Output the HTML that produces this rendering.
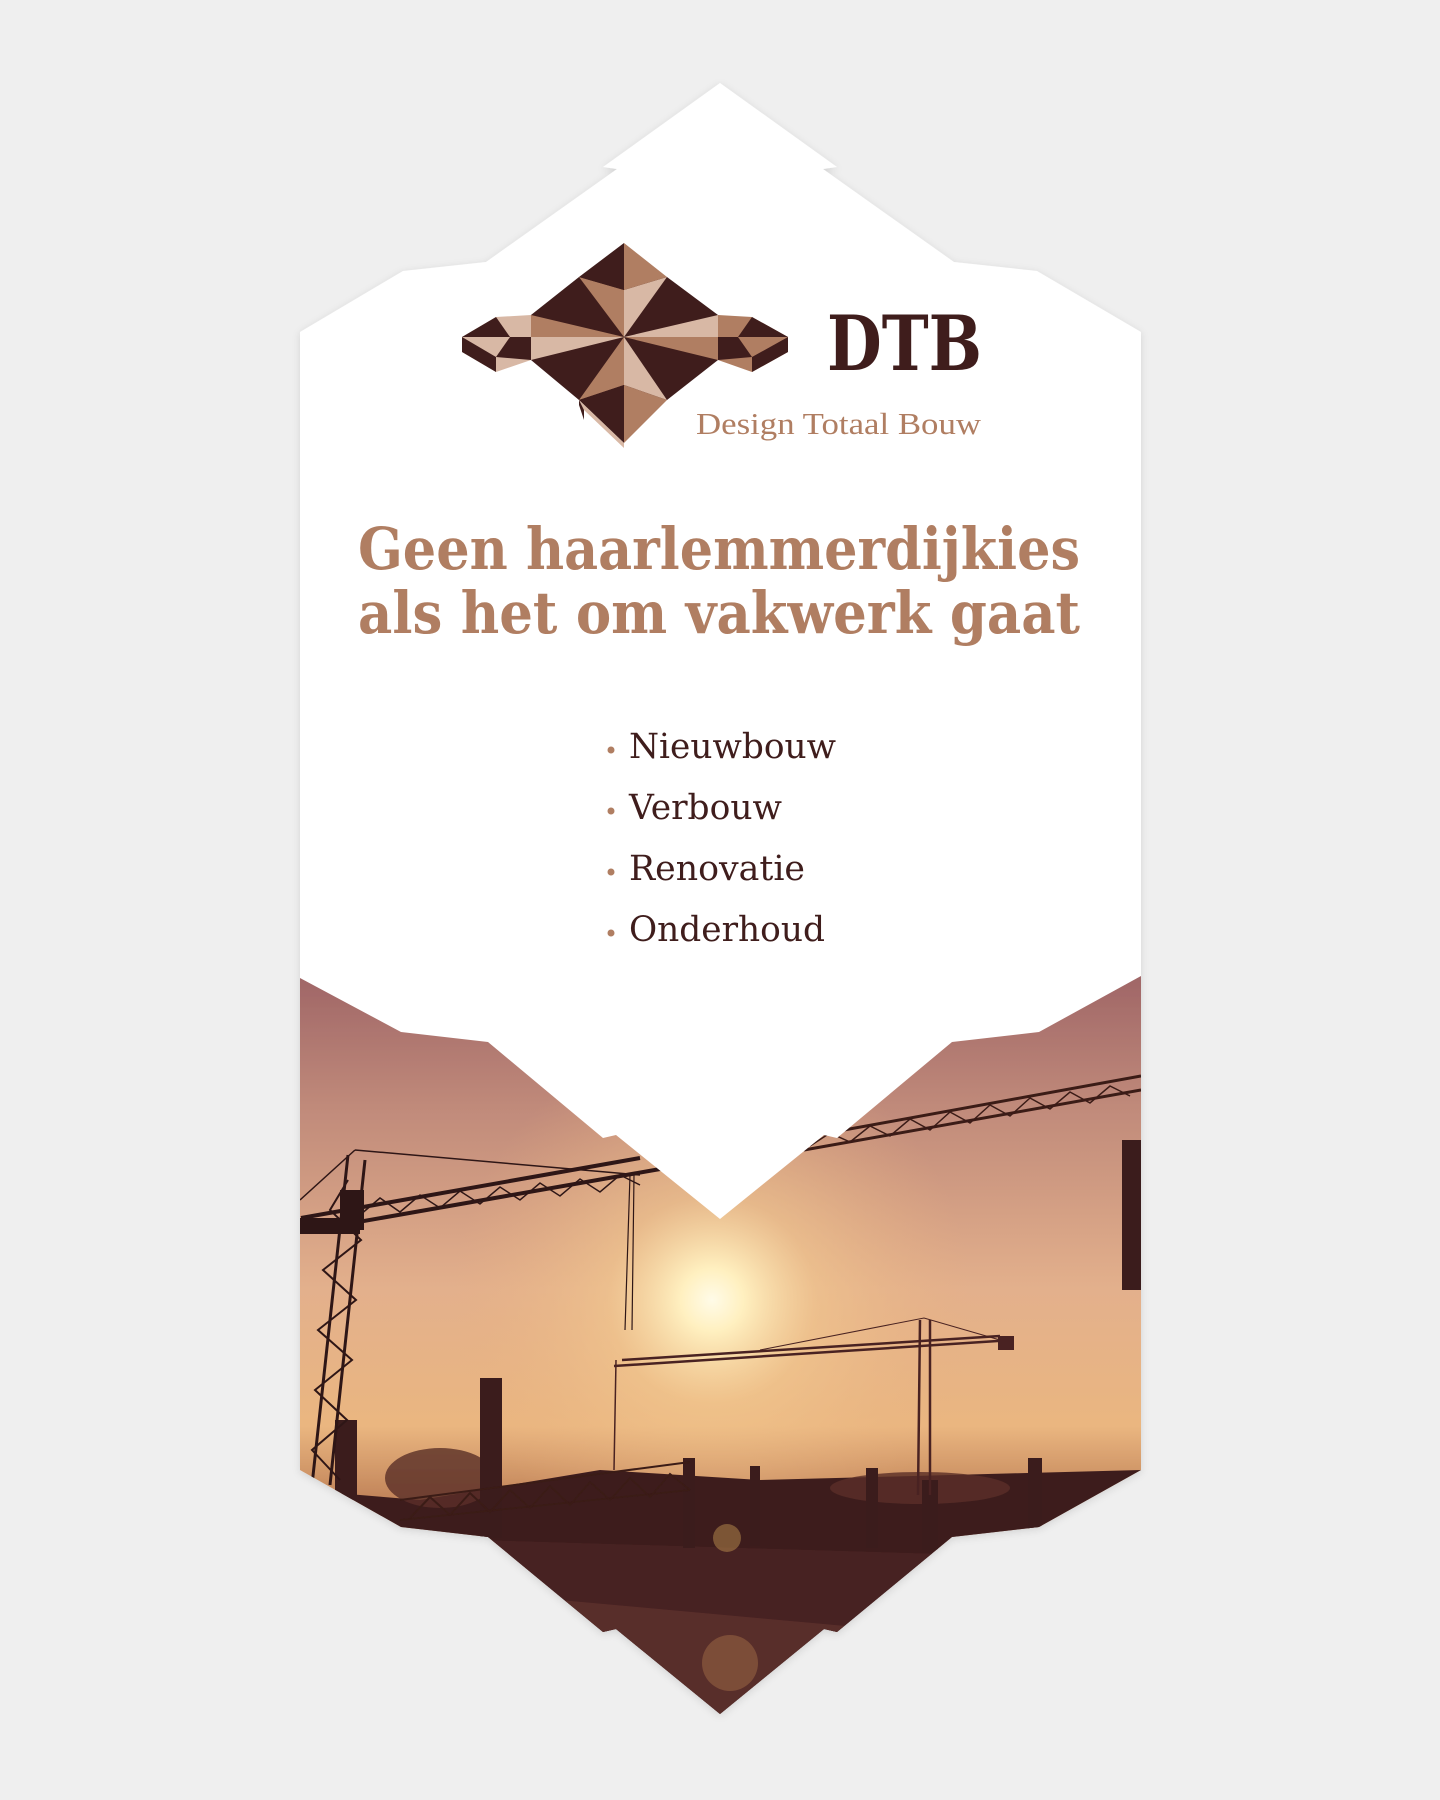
<!DOCTYPE html>
<html><head><meta charset="utf-8"><style>
html,body{margin:0;padding:0;background:#efefef;}
svg{display:block}
</style></head><body>
<svg width="1440" height="1800" viewBox="0 0 1440 1800" xmlns="http://www.w3.org/2000/svg">
<defs>
<clipPath id="photo"><polygon points="300,972 1141,972 1141,1470 1039,1527 952,1537 837,1632 824,1629 720,1714 616,1629 603,1632 488,1537 401,1527 300,1470"/></clipPath>
<linearGradient id="sky" x1="0" y1="0" x2="0" y2="1">
<stop offset="0" stop-color="#9e6466"/><stop offset="0.18" stop-color="#c08a7a"/><stop offset="0.42" stop-color="#e3b08c"/><stop offset="0.6" stop-color="#eab680"/><stop offset="0.7" stop-color="#c08258"/><stop offset="0.8" stop-color="#5a2d24"/><stop offset="1" stop-color="#3a1a1c"/>
</linearGradient>
<radialGradient id="sun" cx="712" cy="1300" r="260" gradientUnits="userSpaceOnUse">
<stop offset="0" stop-color="#fffbe8"/><stop offset="0.12" stop-color="#fff0c0"/><stop offset="0.4" stop-color="#f3c98f" stop-opacity="0.6"/><stop offset="1" stop-color="#e9b080" stop-opacity="0"/>
</radialGradient>
<filter id="sh" x="-5%" y="-5%" width="110%" height="110%"><feDropShadow dx="0" dy="2" stdDeviation="4" flood-color="#000" flood-opacity="0.12"/></filter>
</defs>
<g filter="url(#sh)">
<g clip-path="url(#photo)">
<rect x="300" y="970" width="842" height="760" fill="url(#sky)"/>
<rect x="300" y="970" width="842" height="760" fill="url(#sun)"/>
<path d="M300,1490 L420,1500 L600,1470 L760,1480 L1141,1470 L1141,1730 L300,1730 Z" fill="#3d1d1e"/>
<path d="M480,1540 L1141,1560 L1141,1730 L480,1730Z" fill="#4a2422" opacity="0.7"/>
<path d="M560,1600 L1000,1640 L1000,1730 L560,1730Z" fill="#6b3a34" opacity="0.5"/>
<g fill="#5a2f27" opacity="0.8"><ellipse cx="440" cy="1478" rx="55" ry="30"/><ellipse cx="920" cy="1488" rx="90" ry="16"/></g>
<g fill="#3a1b1c">
<rect x="480" y="1378" width="22" height="160"/><rect x="683" y="1458" width="12" height="90"/>
<rect x="750" y="1466" width="10" height="80"/><rect x="866" y="1468" width="12" height="80"/>
<rect x="922" y="1480" width="16" height="70"/><rect x="1028" y="1458" width="14" height="80"/>
<rect x="1122" y="1140" width="19" height="150"/><rect x="335" y="1420" width="22" height="80"/>
</g>
<g stroke="#2e1616" fill="none" stroke-width="3">
<path d="M348,1155 L312,1485 M365,1160 L330,1485"/>
<path d="M348,1180 L330,1210 L361,1240 L323,1270 L356,1300 L318,1330 L352,1360 L315,1390 L347,1420 L312,1450 L340,1480" stroke-width="2"/>
<path d="M301,1232 L666,1168 M301,1218 L640,1158" stroke-width="4"/>
<path d="M360,1215 L380,1198 L400,1212 L420,1195 L440,1208 L460,1191 L480,1204 L500,1187 L520,1200 L540,1183 L560,1196 L580,1179 L600,1192 L620,1175 L640,1185" stroke-width="1.5"/>
<path d="M355,1150 L640,1175 M300,1200 L355,1150" stroke-width="1.5"/>
<path d="M630,1175 L625,1330 M634,1175 L632,1330" stroke-width="1.2"/>
</g>
<rect x="300" y="1218" width="60" height="16" fill="#2e1616"/>
<rect x="340" y="1190" width="24" height="40" fill="#2e1616"/>
<g stroke="#3a1a18" fill="none">
<path d="M804,1150 L1141,1090 M800,1138 L1141,1076" stroke-width="3"/>
<path d="M810,1146 L830,1133 L850,1142 L870,1126 L890,1136 L910,1119 L930,1130 L950,1112 L970,1123 L990,1105 L1010,1116 L1030,1098 L1050,1109 L1070,1092 L1090,1103 L1110,1086 L1130,1096" stroke-width="1.5"/>
</g>
<g stroke="#4a2320" fill="none">
<path d="M614,1366 L1013,1340 M622,1360 L1000,1336" stroke-width="2.5"/>
<path d="M920,1320 L918,1495 M930,1320 L930,1495" stroke-width="2.5"/>
<path d="M760,1350 L924,1318 L1000,1340" stroke-width="1"/>
<path d="M616,1360 L614,1470" stroke-width="1.5"/>
</g>
<rect x="998" y="1336" width="16" height="14" fill="#4a2320"/>
<g stroke="#3a1a18" fill="none" stroke-width="2">
<path d="M400,1500 L690,1462 M400,1520 L690,1490"/>
<path d="M410,1518 L430,1497 L450,1515 L470,1493 L490,1512 L510,1490 L530,1508 L550,1486 L570,1505 L590,1482 L610,1500 L630,1478 L650,1497 L670,1474 L690,1490"/>
</g>
<circle cx="727" cy="1538" r="14" fill="#f2c060" opacity="0.35"/>
<circle cx="730" cy="1663" r="28" fill="#e8b060" opacity="0.25"/>
</g>
<polygon fill="#fff" points="720,83 837,167 823,169 954,262 1037,271 1141,332 1141,976 1039,1032 952,1042 837,1138 824,1135 720,1219 616,1135 603,1138 488,1042 401,1032 300,978 300,332 403,271 486,262 617,169 603,167"/>
</g>
<!-- logo -->
<g>
<!-- left wing -->
<polygon points="462,337 496,317 531,315 531,360 496,372 462,352" fill="#d8b8a5"/>
<polygon points="462,337 496,317 510,337" fill="#3f1d1c"/>
<polygon points="462,337 510,337 496,357" fill="#d8b8a5"/>
<polygon points="510,337 531,337 531,360 496,357" fill="#3f1d1c"/>
<polygon points="462,337 462,352 496,372 496,357" fill="#3f1d1c"/>
<!-- right wing -->
<polygon points="718,315 752,317 788,337 788,352 752,372 718,360" fill="#b07e62"/>
<polygon points="738,337 752,317 788,337" fill="#3f1d1c"/>
<polygon points="738,337 788,337 752,357" fill="#b07e62"/>
<polygon points="718,337 738,337 752,357 718,360" fill="#3f1d1c"/>
<polygon points="788,337 788,352 752,372 752,357" fill="#3f1d1c"/>
<!-- main -->
<polygon points="579,277 667,277 718,315 718,360 667,400 579,400 531,360 531,315" fill="#3f1d1c"/>
<polygon points="624,337 579,277 624,290" fill="#b07e62"/>
<polygon points="624,337 624,290 667,277" fill="#d8b8a5"/>
<polygon points="624,337 718,315 718,337" fill="#d8b8a5"/>
<polygon points="624,337 718,337 718,360" fill="#b07e62"/>
<polygon points="624,337 579,400 624,385" fill="#b07e62"/>
<polygon points="624,337 624,385 667,400" fill="#d8b8a5"/>
<polygon points="624,337 531,315 531,337" fill="#b07e62"/>
<polygon points="624,337 531,337 531,360" fill="#d8b8a5"/>
<!-- top cap -->
<polygon points="624,243 579,277 624,290" fill="#3f1d1c"/>
<polygon points="624,243 667,277 624,290" fill="#b07e62"/>
<!-- bottom cap -->
<polygon points="579,400 624,385 624,443" fill="#3f1d1c"/>
<polygon points="667,400 624,385 624,443" fill="#b07e62"/>
<polygon points="579,400 624,443 624,448 584,410" fill="#d8b8a5"/>
<polygon points="579,400 584,410 584,420 579,405" fill="#3f1d1c"/>
<text x="827" y="370" font-family="'DejaVu Serif','Liberation Serif',serif" font-weight="bold" font-size="76" fill="#3f1d1c" textLength="155" lengthAdjust="spacingAndGlyphs">DTB</text>
<text x="696" y="434" font-family="'Liberation Serif','DejaVu Serif',serif" font-size="31" fill="#b07e62" textLength="285" lengthAdjust="spacingAndGlyphs">Design Totaal Bouw</text>
</g>
<g font-family="'DejaVu Serif','Liberation Serif',serif" font-weight="bold" font-size="58" fill="#b07e62">
<text x="358" y="569" textLength="722" lengthAdjust="spacingAndGlyphs">Geen haarlemmerdijkies</text>
<text x="358" y="633" textLength="722" lengthAdjust="spacingAndGlyphs">als het om vakwerk gaat</text>
</g>
<g font-family="'DejaVu Serif','Liberation Serif',serif" font-size="35" fill="#3f1d1c">
<circle cx="611" cy="750" r="3.5" fill="#b07e62"/><text x="629" y="758" textLength="207" lengthAdjust="spacingAndGlyphs">Nieuwbouw</text>
<circle cx="611" cy="811" r="3.5" fill="#b07e62"/><text x="629" y="819" textLength="153" lengthAdjust="spacingAndGlyphs">Verbouw</text>
<circle cx="611" cy="872" r="3.5" fill="#b07e62"/><text x="629" y="880" textLength="176" lengthAdjust="spacingAndGlyphs">Renovatie</text>
<circle cx="611" cy="933" r="3.5" fill="#b07e62"/><text x="629" y="941" textLength="196" lengthAdjust="spacingAndGlyphs">Onderhoud</text>
</g>
</svg>
</body></html>
